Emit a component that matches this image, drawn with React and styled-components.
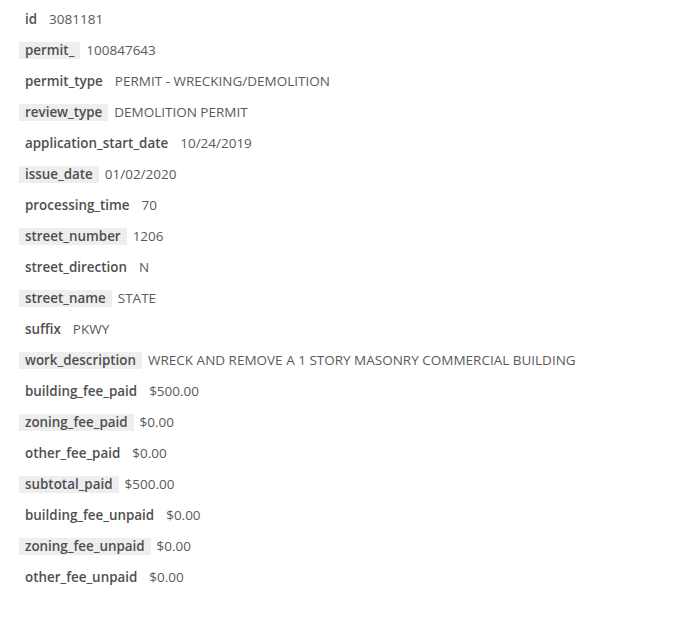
import styled, { createGlobalStyle } from "styled-components";

const GlobalStyle = createGlobalStyle`
  body {
    margin: 0;
    background: #fff;
    font-family: "Open Sans", "Liberation Sans", sans-serif;
  }
`;

const rows = [
  ["id", "3081181"],
  ["permit_", "100847643"],
  ["permit_type", "PERMIT - WRECKING/DEMOLITION"],
  ["review_type", "DEMOLITION PERMIT"],
  ["application_start_date", "10/24/2019"],
  ["issue_date", "01/02/2020"],
  ["processing_time", "70"],
  ["street_number", "1206"],
  ["street_direction", "N"],
  ["street_name", "STATE"],
  ["suffix", "PKWY"],
  ["work_description", "WRECK AND REMOVE A 1 STORY MASONRY COMMERCIAL BUILDING"],
  ["building_fee_paid", "$500.00"],
  ["zoning_fee_paid", "$0.00"],
  ["other_fee_paid", "$0.00"],
  ["subtotal_paid", "$500.00"],
  ["building_fee_unpaid", "$0.00"],
  ["zoning_fee_unpaid", "$0.00"],
  ["other_fee_unpaid", "$0.00"],
];

const List = styled.div`
  display: flex;
  flex-direction: column;
  padding: 3px 0 0 19px;
`;

const Row = styled.div`
  display: flex;
  align-items: baseline;
  box-sizing: border-box;
  height: 31px;
  padding-top: 8px;
`;

const Key = styled.span`
  padding: 0 6px;
  line-height: 17px;
  font-size: 13.4px;
  font-weight: 600;
  color: #4f4f4f;
  background: ${(p) => (p.$shaded ? "#eeeeee" : "transparent")};
`;

const Value = styled.span`
  margin-left: 6px;
  line-height: 17px;
  font-size: 13.5px;
  color: #5a5a5a;
`;

export default function App() {
  return (
    <>
      <GlobalStyle />
      <List>
        {rows.map(([k, v], i) => (
          <Row key={k}>
            <Key $shaded={i % 2 === 1}>{k}</Key>
            <Value>{v}</Value>
          </Row>
        ))}
      </List>
    </>
  );
}
